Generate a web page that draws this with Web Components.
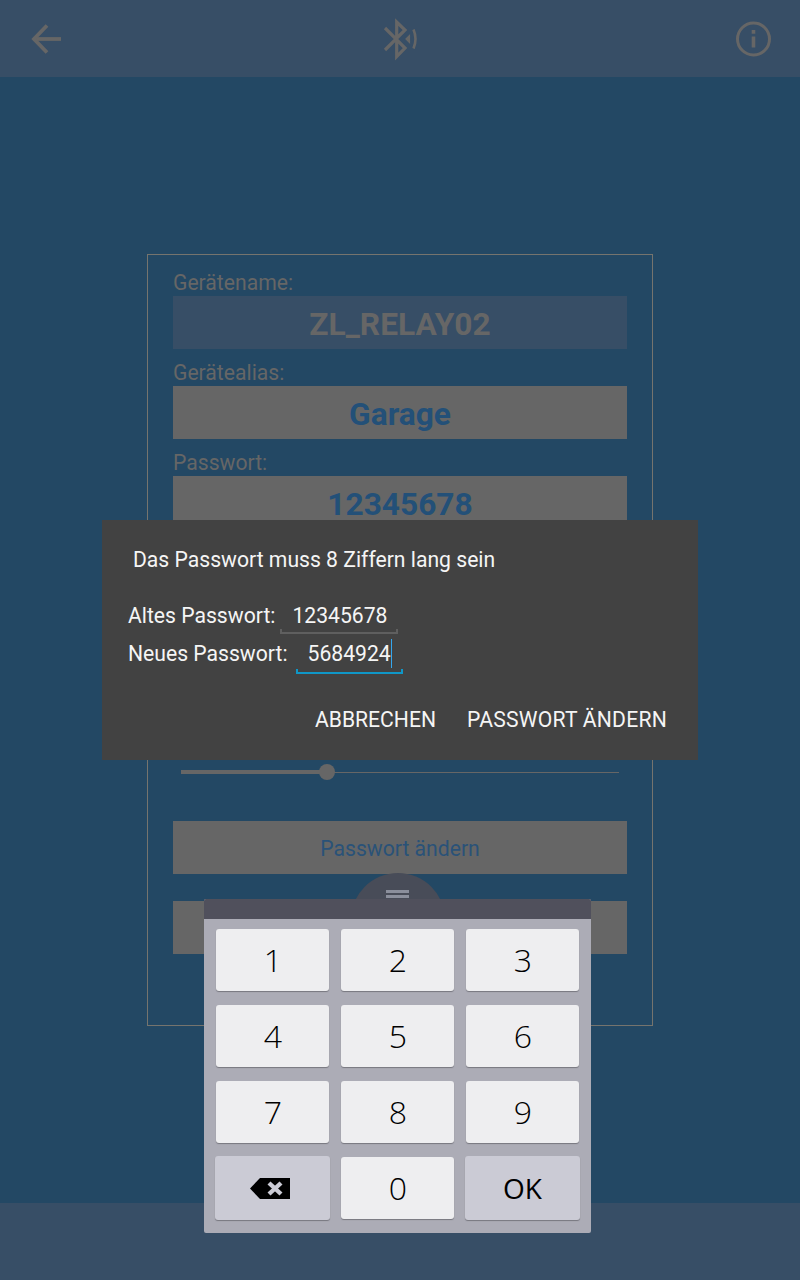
<!DOCTYPE html>
<html lang="de">
<head>
<meta charset="UTF-8">
<title>Passwort ändern</title>
<style>
    html, body { margin: 0; padding: 0; background: #234864; }
    body { font-family: Roboto, "Liberation Sans", sans-serif; }
</style>
</head>
<body>
<template id="app-screen-tpl">
    <style>
        :host { display: grid; grid-template-rows: 77px 1fr 77px; width: 800px; height: 1280px; position: relative; overflow: hidden; background: #234864; }
        .bar { background: #374e66; }
        main { display: flex; align-items: center; justify-content: center; }
    </style>
    <slot name="top"></slot>
    <main><slot></slot></main>
    <div class="bar"></div>
    <slot name="over"></slot>
</template>

<template id="top-bar-tpl">
    <style>
        :host { display: flex; justify-content: space-between; background: #374e66; height: 77px; }
        svg { display: block; width: 50px; height: 50px; margin-top: 15px; fill: none; stroke: #666; }
        .back { margin-left: 20px; }
        .bt { margin-left: 4px; }
        .info { margin-right: 22px; }
    </style>
    <svg class="back" viewBox="0 0 50 50" stroke-width="3.8">
        <path d="M41 24H15"/>
        <path d="M27 10.5 14 24 27 37.5"/>
    </svg>
    <svg class="bt" viewBox="0 0 50 50" stroke-width="3.2">
        <path d="M9 13 29 33 20.7 41.5V7L29 15 9 35"/>
        <path d="M30 24 33.5 20.5V27.5Z" fill="#666" stroke-width="1.2"/>
        <path d="M37.5 14.5Q41.5 24 37.5 33.5" stroke-width="2.6"/>
    </svg>
    <svg class="info" viewBox="0 0 50 50" stroke-width="3">
        <circle cx="25.5" cy="24" r="16"/>
        <path d="M25.5 21.5V32.5M25.5 15V18.7" stroke-width="3.6"/>
    </svg>
</template>

<template id="settings-panel-tpl">
    <style>
        :host { display: flex; flex-direction: column; box-sizing: border-box; width: 506px; height: 772px; padding: 4px 25px 0; border: 1px solid #75746e; }
    </style>
    <slot></slot>
</template>

<template id="field-box-tpl">
    <style>
        :host { display: block; }
        .label { height: 33px; line-height: 48px; font-size: 21.15px; color: #666; padding-bottom: 4px; }
        .box { height: 53px; line-height: 57px; text-align: center; font-size: 31.7px; font-weight: 700; background: #666; color: #235078; }
        :host([readonly]) .box { background: #374e66; color: #666; }
    </style>
    <div class="label" id="label"></div>
    <div class="box"><slot></slot></div>
</template>

<template id="level-slider-tpl">
    <style>
        :host { display: flex; align-items: center; height: 16px; padding: 0 8px; margin-top: 235px; }
        .done { width: 146px; height: 4px; background: #666; }
        .thumb { width: 16px; height: 16px; border-radius: 50%; background: #666; margin: 0 -8px; }
        .rest { flex: 1; height: 1px; background: #666; }
    </style>
    <div class="done"></div>
    <div class="thumb"></div>
    <div class="rest"></div>
</template>

<template id="panel-button-tpl">
    <style>
        :host { display: block; height: 53px; line-height: 56px; text-align: center; font-size: 21.15px; background: #666; color: #2a5278; margin-top: 27px; }
        :host([first]) { margin-top: 41px; }
    </style>
    <slot></slot>
</template>

<template id="pwd-dialog-tpl">
    <style>
        :host { display: block; position: absolute; left: 102px; top: 520px; width: 596px; height: 240px; box-sizing: border-box; padding: 28px 31px 0 26px; background: #424242; color: #f5f5f5; font-size: 21.15px; }
        .msg { line-height: 24px; padding-left: 5px; }
        .rows { margin-top: 25px; }
        .actions { display: flex; justify-content: flex-end; gap: 31px; margin-top: 35px; line-height: 24px; }
        ::slotted([slot="actions"]:last-child) { letter-spacing: .22px; }
    </style>
    <div class="msg"><slot name="msg"></slot></div>
    <div class="rows"><slot></slot></div>
    <div class="actions"><slot name="actions"></slot></div>
</template>

<template id="pwd-row-tpl">
    <style>
        :host { display: flex; height: 38px; line-height: 38px; }
        .input { position: relative; box-sizing: border-box; height: 37px; margin-left: 5px; width: 118px; padding-left: 12px; }
        .input::after { content: ""; position: absolute; left: 0; right: 0; bottom: 0; height: 5px; border: 2px solid #5f5f5f; border-top: 0; box-sizing: border-box; }
        :host([active]) .input { width: 107px; margin-left: 8px; }
        :host([active]) .input::after { border-color: #0f97c7; bottom: -2px; }
        .caret { display: none; position: absolute; top: 4px; width: 1px; height: 29px; background: #35a7ee; }
        :host([active]) .caret { display: block; left: 95px; }
    </style>
    <span><slot name="label"></slot></span>
    <div class="input"><slot></slot><i class="caret"></i></div>
</template>

<template id="num-keypad-tpl">
    <style>
        :host { display: block; position: absolute; left: 204px; top: 899px; width: 387px; height: 334px; background: #acacb6; border-radius: 2px; }
        .handle { position: absolute; left: 147px; top: -26px; width: 94px; height: 94px; border-radius: 50%; background: #484c58; clip-path: inset(0 0 68px 0); }
        .handle::before, .handle::after { content: ""; position: absolute; left: 35px; width: 23px; height: 3px; background: #8b8f9c; }
        .handle::before { top: 17px; }
        .handle::after { top: 22px; }
        .head { height: 20px; background: #50505c; border-radius: 2px 2px 0 0; }
        .keys { display: grid; grid-template-columns: repeat(3, 113px); grid-auto-rows: 62px; column-gap: 12px; row-gap: 14px; padding: 10px 12px; }
    </style>
    <div class="handle"></div>
    <div class="head"></div>
    <div class="keys"><slot></slot></div>
</template>

<template id="num-key-tpl">
    <style>
        :host { display: flex; align-items: center; justify-content: center; box-sizing: border-box; padding: 0 0 0 1px; background: #eeeef0; border-radius: 3px; box-shadow: 0 1px 1px #77777f; font-family: "Open Sans", "Noto Sans", sans-serif; font-weight: 300; font-size: 32px; color: #000; line-height: 1; }
        :host([fn]) { background: #cbcbd5; margin: -1px; }
        :host([word]) { font-size: 28px; font-weight: 400; padding-left: 0; }
    </style>
    <slot></slot>
</template>

<app-screen>
    <top-bar slot="top"></top-bar>
    <settings-panel>
        <field-box label="Gerätename:" readonly>ZL_RELAY02</field-box>
        <field-box label="Gerätealias:">Garage</field-box>
        <field-box label="Passwort:">12345678</field-box>
        <level-slider></level-slider>
        <panel-button first>Passwort ändern</panel-button>
        <panel-button></panel-button>
    </settings-panel>
    <pwd-dialog slot="over">
        <span slot="msg">Das Passwort muss 8 Ziffern lang sein</span>
        <pwd-row><span slot="label">Altes Passwort:</span>12345678</pwd-row>
        <pwd-row active><span slot="label">Neues Passwort:</span>5684924</pwd-row>
        <span slot="actions">ABBRECHEN</span>
        <span slot="actions">PASSWORT ÄNDERN</span>
    </pwd-dialog>
    <num-keypad slot="over">
        <num-key>1</num-key><num-key>2</num-key><num-key>3</num-key>
        <num-key>4</num-key><num-key>5</num-key><num-key>6</num-key>
        <num-key>7</num-key><num-key>8</num-key><num-key>9</num-key>
        <num-key fn>
            <svg style="margin-right:6px" width="40" height="21" viewBox="0 0 40 21"><path d="M0 10.5 10 0H40V21H10Z" fill="#000"/><path d="M19 5 31 16M31 5 19 16" stroke="#cbcbd5" stroke-width="4.4" fill="none"/></svg>
        </num-key>
        <num-key>0</num-key>
        <num-key fn word>OK</num-key>
    </num-keypad>
</app-screen>

<script>
    // plain elements: just clone the template into an open shadow root
    function plain(tag) {
        customElements.define(tag, class extends HTMLElement {
            constructor() {
                super();
                this.attachShadow({mode: 'open'});
                const template = document.getElementById(tag + '-tpl');
                this.shadowRoot.appendChild(document.importNode(template.content, true));
            }
        });
    }
    ['app-screen', 'top-bar', 'settings-panel', 'level-slider', 'panel-button',
     'pwd-dialog', 'pwd-row', 'num-keypad', 'num-key'].forEach(plain);

    class FieldBox extends HTMLElement {
        constructor() {
            super();
            this.attachShadow({mode: 'open'});
            const template = document.getElementById('field-box-tpl');
            this.shadowRoot.appendChild(document.importNode(template.content, true));
        }
        connectedCallback() {
            this.shadowRoot.getElementById('label').textContent = this.getAttribute('label');
        }
    }
    customElements.define('field-box', FieldBox);
</script>
</body>
</html>
